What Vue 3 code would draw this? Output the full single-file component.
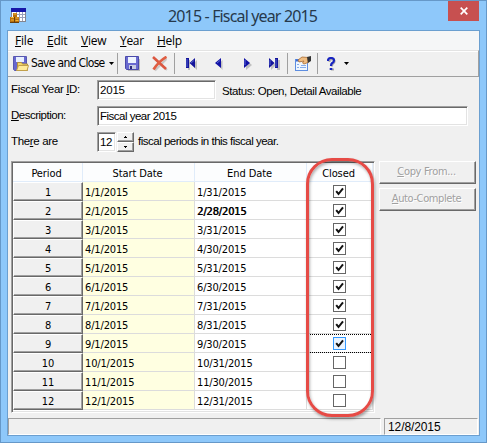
<script setup>
import { ref } from 'vue'

const menus = [
    { key: 'F', rest: 'ile', cls: 'file' },
    { key: 'E', rest: 'dit', cls: 'edit' },
    { key: 'V', rest: 'iew', cls: 'view' },
    { key: 'Y', rest: 'ear', cls: 'year' },
    { key: 'H', rest: 'elp', cls: 'help' },
]

const lastDays = [31, 28, 31, 30, 31, 30, 31, 31, 30, 31, 30, 31]
const periods = ref(lastDays.map((day, i) => ({
    id: i + 1,
    start: `${i + 1}/1/2015`,
    end: `${i + 1}/${day}/2015`,
    closed: i < 9,
})))
const focused = 9

const yearId = ref('2015')
const description = ref('Fiscal year 2015')
const count = ref('12')
</script>

<template>
    <div class="window">
        <div class="titlebar">
            <svg class="appicon" width="16" height="15" viewBox="0 0 16 15">
                <rect x="1.5" y=".5" width="14" height="13" fill="#fff" stroke="#85858f" />
                <rect x="1" y="0" width="15" height="4" fill="#1717a8" />
                <path d="M4 6.5h11M4 9.5h11M6.5 4v9M9.500 4v9M12.500 4v9" stroke="#9aa0bb" />
                <path d="M3 5h4v4h2v5H0V9h3z" fill="#b86f0c" />
                <path d="M3.500 6h3M1 9.500h3M5.500 10h3M1 12h3M5.500 12.500h3" stroke="#f6b635" />
                <path d="M4.500 9v5M0 14.500h9" stroke="#69400c" />
            </svg>
            <h1>2015 - Fiscal year 2015</h1>
            <button class="close">
                <svg width="8" height="8" viewBox="0 0 8 8"><path d="M.7.7l6.600 6.600M7.300.7L.7 7.300" stroke="#fff" stroke-width="1.700" /></svg>
            </button>
        </div>

        <div class="client">
            <div class="menubar">
                <span v-for="m in menus" :key="m.key" :class="m.cls"><u>{{ m.key }}</u>{{ m.rest }}</span>
            </div>

            <div class="toolbar">
                <svg class="saveclose" width="16" height="16" viewBox="0 0 16 16">
                    <path d="M.5.5h13v14H1.500l-1-1z" fill="#6868cf" stroke="#5858b0" />
                    <path d="M3 1h8v5H3z" fill="#e8f0ff" />
                    <path d="M4.500 6.500h4l1 1.500h5v6.500h-10z" fill="#f3d66c" stroke="#b4913b" />
                    <path d="M3.500 14.500l2-5h10l-1.500 5z" fill="#ffeb9b" stroke="#c2a14b" />
                </svg>
                <span class="label">Save and Close</span>
                <svg class="caret" width="5" height="3" viewBox="0 0 5 3"><path d="M0 0h5L2.500 3z" /></svg>
                <i class="sep s1"></i>
                <svg class="save" width="16" height="16" viewBox="0 0 16 16">
                    <path d="M2 3h13v12H3z" fill="#999" opacity=".6" />
                    <path d="M.5.5h13v13h-12l-1-1z" fill="#6a6ad0" stroke="#4a4aaa" />
                    <path d="M3 1h8v6H3z" fill="#eef4ff" />
                    <path d="M4 9h7v4H4z" fill="#c8cce0" />
                    <path d="M5 10h2v3H5z" fill="#292979" />
                </svg>
                <svg class="delete" width="17" height="16" viewBox="0 0 17 16">
                    <path d="M3 3l12 11M14.500 3L3 14.500" stroke="#999" stroke-width="2" opacity=".45" />
                    <path d="M1 1l13 12" stroke="#db5740" stroke-width="2.600" />
                    <path d="M14.500.8Q7 5 1.500 13.500" fill="none" stroke="#df5e43" stroke-width="2.600" />
                </svg>
                <i class="sep s2"></i>
                <svg class="first" width="12" height="12" viewBox="0 0 12 12">
                    <path d="M2 2h2v10H2zM11 2v10L6 7z" fill="#999" opacity=".55" />
                    <path d="M0 0h3v10H0zM9 0v10L3.500 5z" fill="#14149b" />
                    <path d="M1 1v8M8 2.500L5 5" stroke="#5363cc" />
                </svg>
                <svg class="prev" width="8" height="12" viewBox="0 0 8 12">
                    <path d="M7.500 2v10L3 7z" fill="#999" opacity=".55" />
                    <path d="M6 0v10L0 5z" fill="#1111a5" />
                    <path d="M5 2.500L2 5" stroke="#5c6bd2" />
                </svg>
                <svg class="next" width="8" height="12" viewBox="0 0 8 12">
                    <path d="M2 2v10l6-5z" fill="#999" opacity=".55" />
                    <path d="M0 0v10l6-5z" fill="#1111a5" />
                    <path d="M1 2v5" stroke="#5c6bd2" />
                </svg>
                <svg class="last" width="12" height="12" viewBox="0 0 12 12">
                    <path d="M2 2v10l5-5zM8 2h3v10H8z" fill="#999" opacity=".55" />
                    <path d="M0 0v10l5.500-5zM6 0h3v10H6z" fill="#14149b" />
                    <path d="M1 2v5M7 1v8" stroke="#5363cc" />
                </svg>
                <i class="sep s3"></i>
                <svg class="props" width="16" height="16" viewBox="0 0 16 16">
                    <rect x=".5" y="3.500" width="12" height="11" fill="#eef6ff" stroke="#5d8de0" />
                    <path d="M1 4.500h5" stroke="#3769d7" stroke-width="2" />
                    <path d="M2 8.500h2M2 11.500h2M5 11.500h6M6 9.500h5" stroke="#85aceb" />
                    <path d="M3 4l4-3 6 .5v5L9 8 7.500 7 9 5 4 6z" fill="#efbd82" stroke="#a76b32" stroke-width=".8" />
                    <path d="M12 1l4-1v5l-3 2z" fill="#333" />
                </svg>
                <i class="sep s4"></i>
                <svg class="what" width="9" height="14" viewBox="0 0 9 14">
                    <path d="M2.500 5V3.500Q3 2 5 2.200Q8 2.500 7.600 4.500Q7.400 5.800 6 6.800Q5 7.500 5 9.500M4 12.500h3" fill="none" stroke="#aaa" stroke-width="2" />
                    <path d="M1 4V3Q1.500 1 4 1Q7 1 7 3.500Q7 5 5 6.200Q4 7 4 9M2.700 12h2.600" fill="none" stroke="#1824c0" stroke-width="2.200" />
                </svg>
                <svg class="caret2" width="5" height="3" viewBox="0 0 5 3"><path d="M0 0h5L2.500 3z" /></svg>
            </div>

            <div class="form">
                <div class="line one">
                    <label class="lid">Fiscal Year <u>I</u>D:</label>
                    <div class="field id">{{ yearId }}</div>
                    <span class="status">Status: Open, Detail Available</span>
                </div>
                <div class="line two">
                    <label class="ldesc"><u>D</u>escription:</label>
                    <div class="field desc">{{ description }}</div>
                </div>
                <div class="line three">
                    <label class="lthere">The<u>r</u>e are</label>
                    <div class="field count">{{ count }}</div>
                    <div class="spin">
                        <b><svg width="3" height="2" viewBox="0 0 3 2"><path d="M1 0h1v1h1v1H0V1h1z" /></svg></b>
                        <b><svg width="3" height="2" viewBox="0 0 3 2"><path d="M0 0h3v1H2v1H1V1H0z" /></svg></b>
                    </div>
                    <span class="after">fiscal periods in this fiscal year.</span>
                </div>
            </div>

            <div class="main">
                <div class="grid">
                    <div class="row head">
                        <div>Period</div>
                        <div>Start Date</div>
                        <div>End Date</div>
                        <div>Closed</div>
                    </div>
                    <div v-for="p in periods" :key="p.id" class="row">
                        <div class="num">{{ p.id }}</div>
                        <div class="start">{{ p.start }}</div>
                        <div class="end" :class="{ current: p.id == 2 }">{{ p.end }}</div>
                        <div class="closed" :class="{ focus: p.id == focused }">
                            <span class="check" @click="p.closed = !p.closed">
                                <svg v-if="p.closed" width="11" height="11" viewBox="0 0 11 11"><path d="M2.200 5.200L4.500 8L9 2.300" fill="none" stroke="#111" stroke-width="2" /></svg>
                            </span>
                        </div>
                    </div>
                    <div class="callout"></div>
                </div>
                <div class="buttons">
                    <button><span class="copy"><u>C</u>opy From...</span></button>
                    <button><span class="auto"><u>A</u>uto-Complete</span></button>
                </div>
            </div>

            <div class="statusbar">
                <div class="panel wide"></div>
                <div class="panel date">12/8/2015</div>
            </div>
        </div>
    </div>
</template>

<style>
body {
    margin: 0;
    overflow: hidden;
}
</style>

<style scoped>
* {
    box-sizing: border-box;
}
.window {
    width: 487px;
    height: 443px;
    padding: 0 7px 7px 6px;
    border: 1px solid #6698c8;
    background: #8ec8fa;
    color: #000;
    font: 11px/13px "DejaVu Sans Condensed", "DejaVu Sans", sans-serif;
    white-space: nowrap;
}
u {
    text-decoration-thickness: 1px;
    text-underline-offset: 1px;
}
svg {
    display: block;
    flex: none;
}

.titlebar {
    display: flex;
    height: 29px;
    padding-left: 3px;
}
.appicon {
    margin-top: 7px;
}
.titlebar h1 {
    width: 281px;
    margin: 4px 0 0 142px;
    font: 400 16px/22px "Noto Sans", sans-serif;
    letter-spacing: -.85px;
    color: #26394c;
}
.close {
    display: flex;
    align-items: center;
    justify-content: center;
    width: 31px;
    height: 20px;
    padding: 0;
    border: 0;
    background: #c75050;
}

.client {
    width: 473px;
    height: 406px;
    border: 1px solid #6b9fd0;
    background: #f0f0f0;
}
.menubar {
    display: flex;
    height: 19px;
    padding-left: 7px;
    background: #f5f6f7;
    font: 12px/20px "Open Sans", "Noto Sans", sans-serif;
}
.file { width: 32px; letter-spacing: -.2px; }
.edit { width: 34px; letter-spacing: -.3px; }
.view { width: 39px; letter-spacing: -.2px; }
.year { width: 37px; letter-spacing: -.3px; }
.help { letter-spacing: -.3px; }

.toolbar {
    display: flex;
    align-items: center;
    height: 27px;
    padding-left: 5px;
    border-top: 1px solid #e3e3e3;
    border-right: 1px solid #a0a0a0;
    border-bottom: 1px solid #a0a0a0;
    box-shadow: inset 0 1px #fff;
}
.label {
    width: 78px;
    margin-left: 2px;
    font-size: 12px;
    letter-spacing: -.68px;
}
.sep {
    width: 1px;
    height: 21px;
    background: #a0a0a0;
}
.s1 { margin-left: 3px; }
.save { margin-left: 7px; }
.delete { margin-left: 11px; }
.s2 { margin-left: 5px; }
.first { margin-left: 11px; }
.prev { margin-left: 17px; }
.next { margin-left: 21px; }
.last { margin-left: 17px; }
.s3 { margin-left: 6px; }
.props { margin-left: 7px; }
.s4 { margin-left: 6px; }
.what { margin-left: 9px; }
.caret2 { margin-left: 8px; }

.form {
    height: 84px;
    padding: 3px 0 0 3px;
    font: 11.5px/14px "Liberation Sans", Arial, sans-serif;
}
.line {
    display: flex;
    height: 26px;
}
.line label {
    width: 86px;
    padding-top: 2px;
}
.field {
    height: 20px;
    padding: 2px 0 0 2px;
    border: 1px solid #fff;
    border-top-color: #a0a0a0;
    border-left-color: #a0a0a0;
    box-shadow: inset 1px 1px #696969, inset -1px -1px #e3e3e3;
    background: #fff;
}
.id { width: 119px; letter-spacing: -.2px; }
.desc { width: 371px; letter-spacing: -.5px; }
.count { width: 19px; letter-spacing: -.3px; }
.status { padding: 4px 0 0 6px; letter-spacing: -.42px; }
.after { padding: 2px 0 0 4px; letter-spacing: -.5px; }
.lid { letter-spacing: -.35px; }
.ldesc { letter-spacing: -.5px; }
.lthere { letter-spacing: -.35px; }
.spin {
    width: 17px;
    margin-left: 1px;
}
.spin b {
    display: flex;
    align-items: center;
    justify-content: center;
    height: 10px;
    border: 1px solid #fff;
    border-right-color: #696969;
    border-bottom-color: #696969;
    box-shadow: inset -1px -1px #a0a0a0;
}

.main {
    display: flex;
    height: 255px;
}
.grid {
    position: relative;
    width: 364px;
    height: 252px;
    margin-left: 3px;
    border: 1px solid #a0a0a0;
    border-right-color: #fff;
    border-bottom-color: #fff;
    box-shadow: inset 1px 1px #696969, inset -1px -1px #e3e3e3;
    padding: 1px;
    background: #fff;
}
.row {
    display: grid;
    grid-template-columns: 70px 112px 112px 66px;
    height: 19px;
}
.row > div {
    padding: 4px 0 0 2px;
    border-right: 1px solid #dcdcdc;
    border-bottom: 1px solid #dcdcdc;
    letter-spacing: -.15px;
}
.row.head > div {
    padding: 4px 2px 0 0;
    text-align: center;
    background: #fcfdfe;
    border-color: #e0ecfa;
    letter-spacing: -.1px;
}
.row > .num {
    padding: 3px 0 0;
    text-align: center;
    background: #f0f0f0;
    border: 1px solid #fff;
    border-right-color: #696969;
    border-bottom-color: #696969;
    box-shadow: inset -1px -1px #a0a0a0;
}
.row > .start {
    background: #ffffe1;
}
.current {
    text-shadow: .5px 0 #000;
}
.row > .closed {
    padding: 3px 0 0 26px;
}
.row > .focus {
    outline: 1px dotted #000;
    outline-offset: -1px;
}
.check {
    display: block;
    width: 13px;
    height: 13px;
    border: 1px solid #666;
    background: #fff;
}
.focus .check {
    border-color: #3399ff;
    background: #eaf4ff;
}
/* red ring round the Closed column */
.callout {
    position: absolute;
    top: -4px;
    left: 294px;
    width: 68px;
    height: 259px;
    border: 3px solid #e64b46;
    border-radius: 26px;
    box-shadow: 1px 2px 3px rgba(0, 0, 0, .35), inset 1px 2px 3px rgba(0, 0, 0, .3);
    pointer-events: none;
}

.buttons {
    padding-left: 4px;
}
.buttons button {
    display: block;
    width: 97px;
    height: 23px;
    margin-bottom: 4px;
    padding: 0 2px 1px 0;
    border: 1px solid #fff;
    border-right-color: #696969;
    border-bottom-color: #696969;
    box-shadow: inset -1px -1px #a0a0a0;
    background: #f0f0f0;
    color: #a0a0a0;
    font: 11px/14px "DejaVu Sans Condensed", sans-serif;
    text-shadow: 1px 1px #fff;
}
.copy { letter-spacing: -.3px; }
.auto { letter-spacing: -.4px; }

.statusbar {
    display: flex;
    gap: 3px;
    height: 17px;
    margin-top: 2px;
}
.panel {
    border: 1px solid #fff;
    border-top-color: #a0a0a0;
    border-left-color: #a0a0a0;
}
.wide { width: 373px; }
.date {
    width: 94px;
    padding: 1px 0 0 3px;
    font: 12px/14px "Liberation Sans", Arial, sans-serif;
    letter-spacing: -.1px;
}
</style>
